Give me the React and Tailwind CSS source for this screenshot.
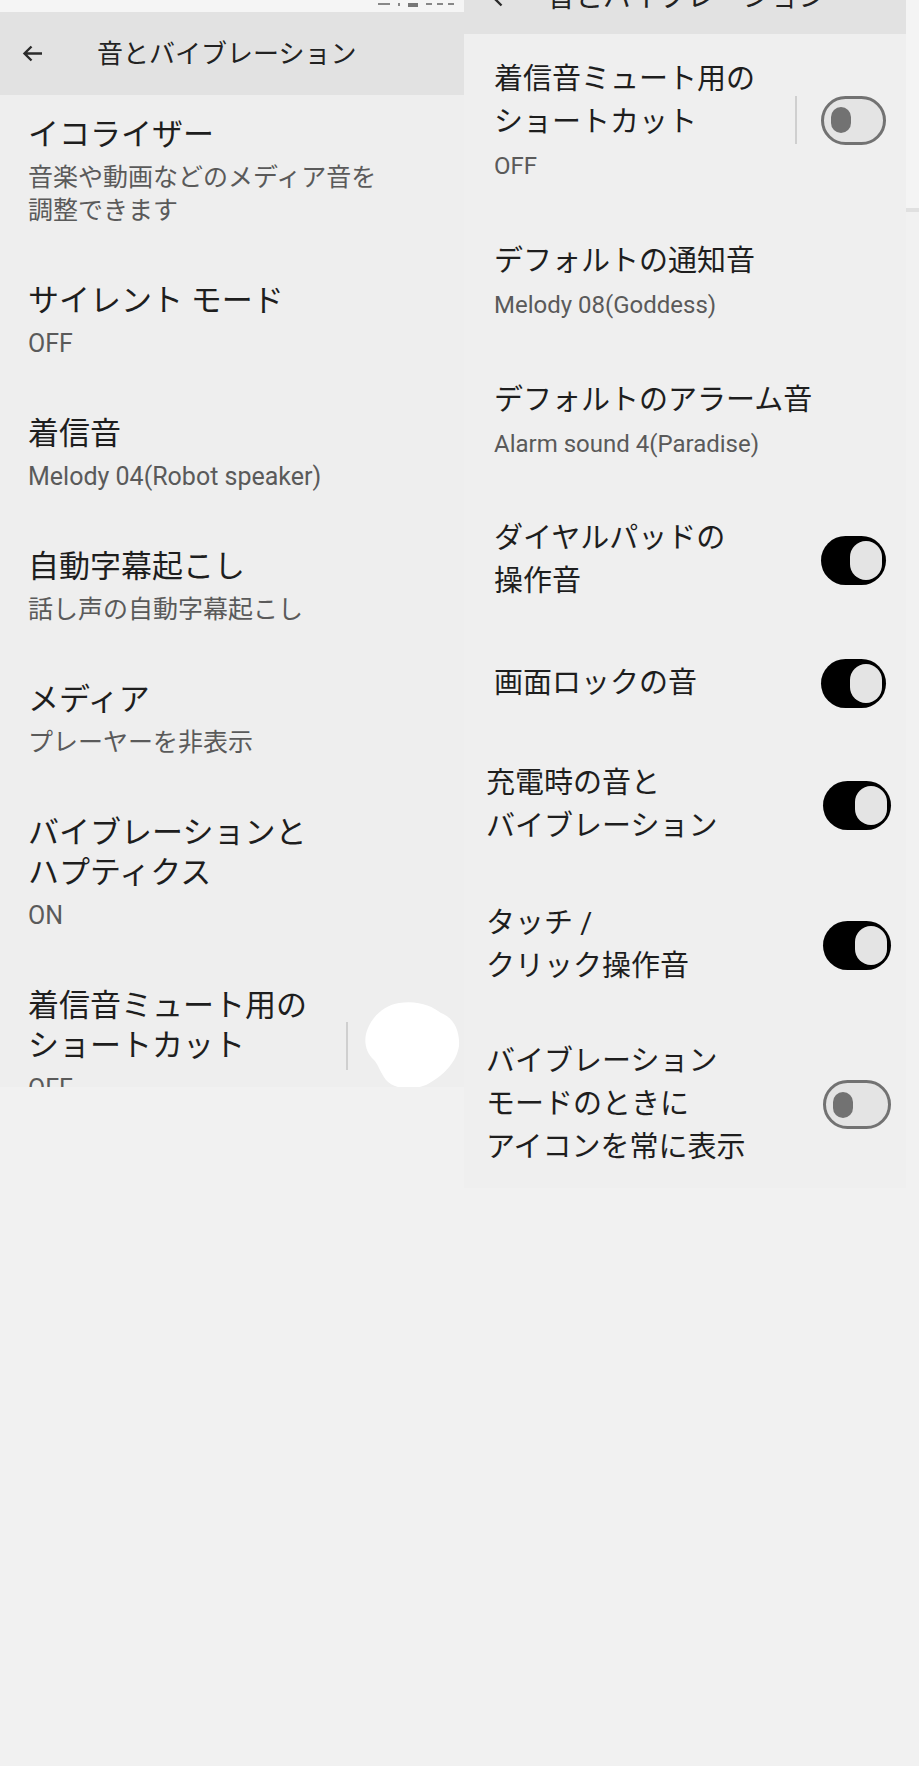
import React from "react";

const FONT = "font-['Roboto','Noto_Sans_CJK_JP',sans-serif]";

const LEFT_ITEMS = [
  { title: ["イコライザー"], sub: ["音楽や動画などのメディア音を", "調整できます"], first: true },
  { title: ["サイレント モード"], sub: ["OFF"] },
  { title: ["着信音"], sub: ["Melody 04(Robot speaker)"] },
  { title: ["自動字幕起こし"], sub: ["話し声の自動字幕起こし"] },
  { title: ["メディア"], sub: ["プレーヤーを非表示"] },
  { title: ["バイブレーションと", "ハプティクス"], sub: ["ON"] },
];

const BackArrow = ({ className }) => (
  <svg width="21" height="17" viewBox="0 0 21 17" className={className}>
    <path d="M20 8.5H2.5M9.5 1.5L2.5 8.5L9.5 15.5" fill="none" stroke="#2b2b2b" strokeWidth="2.4" />
  </svg>
);

const Toggle = ({ on, wide }) => {
  const size = wide ? "w-[68px] h-[49px]" : "w-[65px] h-[49px]";
  if (on) {
    return (
      <div className={`${size} shrink-0 rounded-full bg-black flex items-center justify-end pr-[4px]`}>
        <div className="w-[32px] h-[39px] rounded-full bg-[#e4e4e4]" />
      </div>
    );
  }
  return (
    <div className={`${size} shrink-0 rounded-full border-[3px] border-[#727272] bg-[#e4e4e4] flex items-center pl-[7px]`}>
      <div className="w-[20px] h-[26px] rounded-full bg-[#727272]" />
    </div>
  );
};

const Blob = () => (
  <svg width="97" height="89" viewBox="0 0 97 89" className="shrink-0">
    <path
      d="M36 2C55 -1 69 5 78 12C91 17 97 30 96 45C94 60 81 75 63 84C48 90 31 88 23 79C17 71 15 63 11 59C2 51 0 38 5 27C11 13 23 4 36 2Z"
      fill="#ffffff"
    />
  </svg>
);

const LeftItem = ({ item }) => (
  <div className={`shrink-0 ${item.first ? "pt-[20px]" : "pt-[27px]"} pb-[27px] pl-[28px]`}>
    {item.title.map((l) => (
      <div key={l} className="text-[31px] leading-[40px] text-[#1e1e1e] whitespace-nowrap">
        {l}
      </div>
    ))}
    <div className="mt-[6px]">
      {item.sub.map((l) => (
        <div key={l} className="text-[25px] leading-[33px] text-[#5a5a5a] whitespace-nowrap">
          {l}
        </div>
      ))}
    </div>
  </div>
);

const RightItem = ({ title, sub, toggle, pt, pb, pl, mr, divider, wide }) => (
  <div className={`shrink-0 flex items-center ${pt} ${pb} ${pl} ${mr}`}>
    <div className="flex-1">
      {title.map((l) => (
        <div key={l} className="text-[29px] leading-[43px] text-[#1e1e1e] whitespace-nowrap">
          {l}
        </div>
      ))}
      {sub && (
        <div className="mt-[6px] text-[24px] leading-[32px] text-[#5a5a5a] whitespace-nowrap">{sub}</div>
      )}
    </div>
    {divider && <div className="w-[2px] h-[48px] bg-[#cfcfcf] mr-[24px]" />}
    {toggle !== undefined && <Toggle on={toggle} wide={wide} />}
  </div>
);

export default function App() {
  return (
    <div className={`w-[919px] min-h-[1766px] bg-[#f1f1f1] flex items-start ${FONT}`}>
      {/* left screenshot */}
      <div className="w-[464px] h-[1087px] overflow-hidden bg-[#eeeeee] flex flex-col">
        <div className="h-[12px] shrink-0 bg-[#f5f5f5] flex items-start justify-end gap-[8px] pr-[10px] pt-[3px]">
          <div className="w-[12px] h-[2px] bg-[#888]" />
          <div className="w-[2px] h-[3px] bg-[#888]" />
          <div className="w-[10px] h-[4px] bg-[#777]" />
          <div className="w-[28px] h-[3px] border-t-2 border-dashed border-[#888]" />
        </div>
        <div className="h-[83px] shrink-0 bg-[#e2e2e2] flex items-center pl-[22px]">
          <BackArrow />
          <span className="ml-[54px] text-[26px] leading-[30px] text-[#222] whitespace-nowrap">音とバイブレーション</span>
        </div>
        {LEFT_ITEMS.map((it) => (
          <LeftItem key={it.title[0]} item={it} />
        ))}
        <div className="flex items-center pt-[27px] pb-[27px] pl-[28px] shrink-0">
          <div className="flex-1">
            <div className="text-[31px] leading-[40px] text-[#1e1e1e] whitespace-nowrap">着信音ミュート用の</div>
            <div className="text-[31px] leading-[40px] text-[#1e1e1e] whitespace-nowrap">ショートカット</div>
            <div className="mt-[6px] text-[25px] leading-[33px] text-[#5a5a5a]">OFF</div>
          </div>
          <div className="w-[2px] h-[48px] bg-[#cfcfcf] mr-[15px]" />
          <div className="mr-[4px]">
            <Blob />
          </div>
        </div>
      </div>

      {/* right screenshot */}
      <div className="w-[442px] bg-[#efefef] flex flex-col">
        <div className="h-[34px] shrink-0 bg-[#e2e2e2] overflow-hidden">
          <div className="-mt-[20px] h-[36px] flex items-center pl-[28px]">
            <BackArrow />
            <span className="ml-[34px] text-[28px] leading-[36px] text-[#222] whitespace-nowrap">音とバイブレーション</span>
          </div>
        </div>
        <RightItem
          title={["着信音ミュート用の", "ショートカット"]}
          sub="OFF"
          toggle={false}
          divider
          pt="pt-[24px]"
          pb="pb-[29px]"
          pl="pl-[30px]"
          mr="mr-[20px]"
        />
        <RightItem title={["デフォルトの通知音"]} sub="Melody 08(Goddess)" pt="pt-[29px]" pb="pb-[29px]" pl="pl-[30px]" mr="mr-[20px]" />
        <RightItem title={["デフォルトのアラーム音"]} sub="Alarm sound 4(Paradise)" pt="pt-[29px]" pb="pb-[29px]" pl="pl-[30px]" mr="mr-[20px]" />
        <RightItem title={["ダイヤルパッドの", "操作音"]} toggle pt="pt-[28px]" pb="pb-[28px]" pl="pl-[30px]" mr="mr-[20px]" />
        <RightItem title={["画面ロックの音"]} toggle pt="pt-[28px]" pb="pb-[26px]" pl="pl-[30px]" mr="mr-[20px]" />
        <RightItem title={["充電時の音と", "バイブレーション"]} toggle wide pt="pt-[28px]" pb="pb-[26px]" pl="pl-[22px]" mr="mr-[15px]" />
        <RightItem title={["タッチ /", "クリック操作音"]} toggle wide pt="pt-[28px]" pb="pb-[24px]" pl="pl-[22px]" mr="mr-[15px]" />
        <RightItem
          title={["バイブレーション", "モードのときに", "アイコンを常に表示"]}
          toggle={false}
          wide
          pt="pt-[28px]"
          pb="pb-[19px]"
          pl="pl-[22px]"
          mr="mr-[15px]"
        />
      </div>

      <div className="flex-1 flex flex-col">
        <div className="h-[208px] bg-[#f4f4f4]" />
        <div className="h-[4px] bg-[#e0e0e0]" />
      </div>
    </div>
  );
}
